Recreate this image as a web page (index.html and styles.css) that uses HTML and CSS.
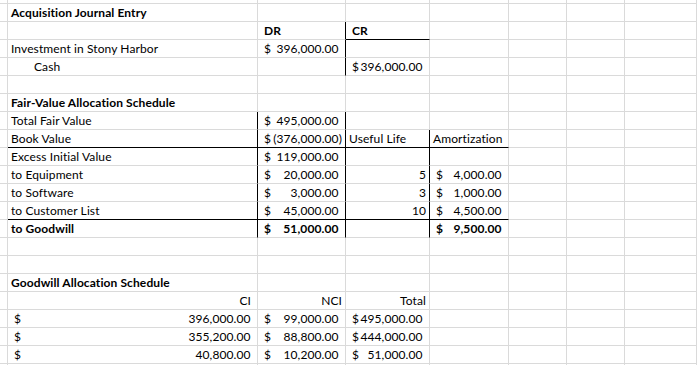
FILE: index.html
```html
<!DOCTYPE html>
<html lang="en">
<head>
<meta charset="utf-8">
<title>Acquisition Journal Entry</title>
<link rel="stylesheet" href="styles.css">
</head>
<body>
<div class="sheet">
  <div class="r top"><div class="c"></div><div class="c"></div><div class="c"></div><div class="c"></div><div class="c"></div><div class="c"></div><div class="c"></div><div class="c"></div></div>

  <div class="r"><div class="c"></div><div class="c b">Acquisition Journal Entry</div><div class="c"></div><div class="c"></div><div class="c"></div><div class="c"></div><div class="c"></div><div class="c"></div></div>
  <div class="r"><div class="c"></div><div class="c"></div><div class="c b atxt br">DR</div><div class="c b atxt bb">CR</div><div class="c"></div><div class="c"></div><div class="c"></div><div class="c"></div></div>
  <div class="r"><div class="c"></div><div class="c">Investment in Stony Harbor</div><div class="c acct br"><span>$</span><span class="n">396,000.00</span></div><div class="c"></div><div class="c"></div><div class="c"></div><div class="c"></div><div class="c"></div></div>
  <div class="r"><div class="c"></div><div class="c ind">Cash</div><div class="c br"></div><div class="c acct"><span>$</span><span class="n">396,000.00</span></div><div class="c"></div><div class="c"></div><div class="c"></div><div class="c"></div></div>
  <div class="r"><div class="c"></div><div class="c"></div><div class="c"></div><div class="c"></div><div class="c"></div><div class="c"></div><div class="c"></div><div class="c"></div></div>

  <div class="r"><div class="c"></div><div class="c b">Fair-Value Allocation Schedule</div><div class="c"></div><div class="c"></div><div class="c"></div><div class="c"></div><div class="c"></div><div class="c"></div></div>
  <div class="r"><div class="c"></div><div class="c br">Total Fair Value</div><div class="c acct br"><span>$</span><span class="n">495,000.00</span></div><div class="c"></div><div class="c"></div><div class="c"></div><div class="c"></div><div class="c"></div></div>
  <div class="r"><div class="c"></div><div class="c br bb">Book Value</div><div class="c acct br bb"><span>$</span><span class="n neg">(376,000.00)</span></div><div class="c br bb">Useful Life</div><div class="c bb">Amortization</div><div class="c"></div><div class="c"></div><div class="c"></div></div>
  <div class="r"><div class="c"></div><div class="c br">Excess Initial Value</div><div class="c acct br"><span>$</span><span class="n">119,000.00</span></div><div class="c br"></div><div class="c"></div><div class="c"></div><div class="c"></div><div class="c"></div></div>
  <div class="r"><div class="c"></div><div class="c br">to Equipment</div><div class="c acct br"><span>$</span><span class="n">20,000.00</span></div><div class="c num br">5</div><div class="c acct"><span>$</span><span class="n">4,000.00</span></div><div class="c"></div><div class="c"></div><div class="c"></div></div>
  <div class="r"><div class="c"></div><div class="c br">to Software</div><div class="c acct br"><span>$</span><span class="n">3,000.00</span></div><div class="c num br">3</div><div class="c acct"><span>$</span><span class="n">1,000.00</span></div><div class="c"></div><div class="c"></div><div class="c"></div></div>
  <div class="r"><div class="c"></div><div class="c br bb">to Customer List</div><div class="c acct br bb"><span>$</span><span class="n">45,000.00</span></div><div class="c num br bb">10</div><div class="c acct bb"><span>$</span><span class="n">4,500.00</span></div><div class="c"></div><div class="c"></div><div class="c"></div></div>
  <div class="r"><div class="c"></div><div class="c b br">to Goodwill</div><div class="c b acct br"><span>$</span><span class="n">51,000.00</span></div><div class="c br"></div><div class="c b acct"><span>$</span><span class="n">9,500.00</span></div><div class="c"></div><div class="c"></div><div class="c"></div></div>
  <div class="r"><div class="c"></div><div class="c"></div><div class="c"></div><div class="c"></div><div class="c"></div><div class="c"></div><div class="c"></div><div class="c"></div></div>
  <div class="r"><div class="c"></div><div class="c"></div><div class="c"></div><div class="c"></div><div class="c"></div><div class="c"></div><div class="c"></div><div class="c"></div></div>

  <div class="r"><div class="c"></div><div class="c b">Goodwill Allocation Schedule</div><div class="c"></div><div class="c"></div><div class="c"></div><div class="c"></div><div class="c"></div><div class="c"></div></div>
  <div class="r"><div class="c"></div><div class="c num wide">CI</div><div class="c num">NCI</div><div class="c num">Total</div><div class="c"></div><div class="c"></div><div class="c"></div><div class="c"></div></div>
  <div class="r"><div class="c"></div><div class="c acct"><span>$</span><span class="n">396,000.00</span></div><div class="c acct"><span>$</span><span class="n">99,000.00</span></div><div class="c acct"><span>$</span><span class="n">495,000.00</span></div><div class="c"></div><div class="c"></div><div class="c"></div><div class="c"></div></div>
  <div class="r"><div class="c"></div><div class="c acct"><span>$</span><span class="n">355,200.00</span></div><div class="c acct"><span>$</span><span class="n">88,800.00</span></div><div class="c acct"><span>$</span><span class="n">444,000.00</span></div><div class="c"></div><div class="c"></div><div class="c"></div><div class="c"></div></div>
  <div class="r"><div class="c"></div><div class="c acct"><span>$</span><span class="n">40,800.00</span></div><div class="c acct"><span>$</span><span class="n">10,200.00</span></div><div class="c acct"><span>$</span><span class="n">51,000.00</span></div><div class="c"></div><div class="c"></div><div class="c"></div><div class="c"></div></div>
  <div class="r"><div class="c"></div><div class="c"></div><div class="c"></div><div class="c"></div><div class="c"></div><div class="c"></div><div class="c"></div><div class="c"></div></div>
</div>
</body>
</html>
```

FILE: styles.css
```css
* {
  box-sizing: border-box;
  margin: 0;
  padding: 0;
}

html,
body {
  background: #ffffff;
}

body {
  font-family: Lato, "Liberation Sans", sans-serif;
  font-size: 12px;
  letter-spacing: 0.1px;
  color: #000000;
  overflow: hidden;
  width: 697px;
  height: 365px;
}

.sheet {
  width: 697px;
}

.r {
  display: grid;
  grid-template-columns: 8px 250px 88px 84px 79px 58px 58px 1fr;
  height: 18px;
}

.r.top {
  height: 4px;
}

.c {
  border-right: 1px solid #dadada;
  border-bottom: 1px solid #dadada;
  line-height: 17px;
  padding: 0 3px;
  white-space: nowrap;
  min-width: 0;
}

.b {
  font-weight: 700;
}

.ind {
  padding-left: 26px;
}

.atxt {
  padding-left: 6px;
}

.num {
  text-align: right;
}

.num.wide {
  padding-right: 6px;
}

.acct {
  display: flex;
  justify-content: space-between;
  padding-left: 6px;
  padding-right: 3px;
}

.acct .n::after {
  content: ")";
  visibility: hidden;
}

.acct .n.neg::after {
  content: none;
}

.br {
  border-right-color: #000000;
}

.bb {
  border-bottom-color: #000000;
}
```
